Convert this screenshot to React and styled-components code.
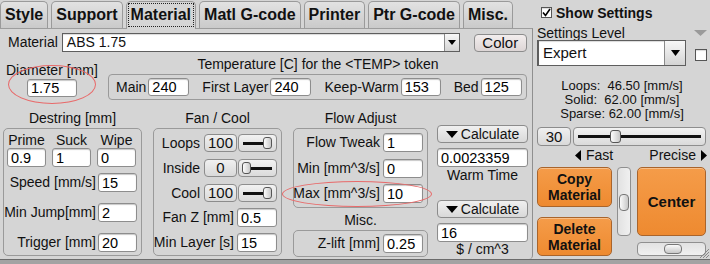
import React from 'react'
import styled, { createGlobalStyle } from 'styled-components'

const GlobalStyle = createGlobalStyle`
  body {
    margin: 0;
    background: #d5d5d5;
    font-family: "Liberation Sans", Arial, sans-serif;
    color: #111;
  }
`

const Window = styled.div`
  width: 710px;
  height: 264px;
  overflow: hidden;
  background: #d5d5d5;
  position: relative;
`

const Main = styled.div`
  display: flex;
  height: 259px;
`

const Footer = styled.div`
  height: 5px;
  box-sizing: border-box;
  border-top: 1px solid #6b6b6b;
  background: #a3a3a3;
`

/* ---------- left tab pane ---------- */

const Left = styled.div`
  width: 533px;
  display: flex;
  flex-direction: column;
`

const TabBar = styled.div`
  display: flex;
  align-items: flex-end;
  gap: 3px;
  height: 28px;
  position: relative;
  z-index: 1;
`

const Tab = styled.div`
  box-sizing: border-box;
  height: ${p => (p.$active ? 28 : 27)}px;
  margin-bottom: ${p => (p.$active ? -1 : 0)}px;
  padding: 0 4px;
  border: 1px solid #9a9a9a;
  border-bottom: none;
  border-radius: 5px 5px 0 0;
  background: ${p => (p.$active ? '#d5d5d5' : 'linear-gradient(#e2e2e2, #cacaca)')};
  font-size: 16px;
  font-weight: bold;
  line-height: 25px;
  white-space: nowrap;

  span {
    display: inline-block;
    line-height: 22px;
    border: 1px dotted ${p => (p.$active ? '#222' : 'transparent')};
    margin: 0 -3px;
    padding: 0 2px;
  }
`

const Panel = styled.div`
  flex: 1;
  box-sizing: border-box;
  border-top: 1px solid #9d9d9d;
  border-right: 1px solid #8f8f8f;
  border-bottom-right-radius: 4px;
  padding: 0 4px 0 3px;
`

const Label = styled.div`
  font-size: 14px;
  line-height: 17px;
  white-space: nowrap;
`

const Field = styled.input.attrs({ type: 'text', readOnly: true })`
  box-sizing: border-box;
  width: ${p => p.$w || 40}px;
  height: ${p => p.$h || 19}px;
  margin: 0;
  padding: 0 3px;
  border: 1px solid #8d8d8d;
  border-radius: 3px;
  background: #fff;
  box-shadow: inset 0 1px 1px rgba(0, 0, 0, 0.22);
  font-family: "Liberation Sans", Arial, sans-serif;
  font-size: 14.5px;
  color: #000;
  outline: none;
  flex-shrink: 0;
`

const PlainButton = styled.div`
  box-sizing: border-box;
  width: ${p => p.$w}px;
  height: ${p => p.$h || 18}px;
  display: flex;
  align-items: center;
  justify-content: center;
  gap: 3px;
  border: 1px solid #8c8c8c;
  border-radius: 4px;
  background: ${p => p.$tint || 'linear-gradient(#f0f0f0, #d9d9d9)'};
  font-size: ${p => p.$size || 14}px;
  line-height: 16px;
  flex-shrink: 0;
`

const MaterialRow = styled.div`
  display: flex;
  align-items: center;
  height: 19px;
  margin-top: 4px;
  padding-left: 5px;

  ${Label} {
    margin-right: 4px;
  }
`

const Combo = styled.div`
  display: flex;
  box-sizing: border-box;
  width: ${p => p.$w}px;
  height: ${p => p.$h}px;
  border: 1px solid #5e5e5e;
  border-left-width: ${p => p.$thick ? 2 : 1}px;
  background: #fff;
  box-shadow: inset 0 1px 1px rgba(0, 0, 0, 0.15);
`

const ComboText = styled.div`
  flex: 1;
  padding-left: 4px;
  font-size: ${p => p.$size || 14}px;
  line-height: ${p => p.$lh || 17}px;
`

const ComboArrow = styled.div`
  width: ${p => p.$w || 14}px;
  display: flex;
  align-items: center;
  justify-content: center;
  border-left: 1px solid #8a8a8a;
  background: linear-gradient(#f7f7f7, #d4d4d4);
`

const SecondRow = styled.div`
  display: flex;
  margin-top: 4px;
`

const DiameterCol = styled.div`
  position: relative;
  width: 105px;
  flex-shrink: 0;

  ${Label} {
    margin: 6px 0 0 3px;
  }
  ${Field} {
    margin-left: 24px;
  }
`

const Highlight = styled.div`
  position: absolute;
  left: ${p => p.$x}px;
  top: ${p => p.$y}px;
  width: ${p => p.$w}px;
  height: ${p => p.$h}px;
  border: 1px solid #e86a6a;
  border-radius: 50%;
  pointer-events: none;
`

const TempCol = styled.div`
  flex: 1;
  ${Label} {
    text-align: center;
  }
`

const TempBox = styled.div`
  box-sizing: border-box;
  height: 26px;
  margin: 1px 1px 0 0;
  border: 1px solid #9a9a9a;
  border-radius: 4px;
  display: flex;
  align-items: center;
  gap: 13px;
  padding-left: 7px;
`

const Pair = styled.div`
  display: flex;
  align-items: center;
  gap: ${p => p.$gap || 2}px;
  justify-content: flex-end;
  margin-top: ${p => p.$top || 0}px;
`

const ThirdRow = styled.div`
  display: flex;
  margin-top: 10px;
`

const Column = styled.div`
  width: ${p => p.$w}px;
  margin-left: ${p => p.$ml || 0}px;
  flex-shrink: 0;
  display: flex;
  flex-direction: column;
`

const GroupTitle = styled(Label)`
  text-align: center;
  margin-top: ${p => p.$top || 0}px;
`

const GroupBox = styled.div`
  box-sizing: border-box;
  height: ${p => p.$h}px;
  margin-top: ${p => p.$top || 1}px;
  border: 1px solid #9a9a9a;
  border-radius: 5px;
  padding: ${p => p.$pad};
  display: flex;
  flex-direction: column;
  ${p => p.$center && 'justify-content: center;'}
`

const Grid3 = styled.div`
  display: grid;
  grid-template-columns: 39px 39px 39px;
  column-gap: 6px;
  ${Label} {
    text-align: center;
    line-height: 16px;
  }
`

const SliderBox = styled.div`
  position: relative;
  box-sizing: border-box;
  width: ${p => p.$w}px;
  height: ${p => p.$h || 18}px;
  border: 1px solid #8e8e8e;
  border-radius: 4px;
  background: linear-gradient(#f2f2f2, #dadada);
  flex-shrink: 0;
`

const Track = styled.div`
  position: absolute;
  left: 4px;
  right: 4px;
  top: 50%;
  height: 3px;
  margin-top: -1.5px;
  background: #111;
`

const Thumb = styled.div`
  position: absolute;
  top: 2px;
  bottom: 2px;
  width: 9px;
  box-sizing: border-box;
  border: 1px solid #555;
  border-radius: 3px;
  background: linear-gradient(90deg, #fdfdfd, #c9c9c9);
`

const CenterText = styled(Label)`
  text-align: center;
  line-height: ${p => p.$lh || 17}px;
`

/* ---------- right settings side ---------- */

const Side = styled.div`
  flex: 1;
  display: flex;
  flex-direction: column;
  padding: 4px 3px 0 4px;
`

const CheckRow = styled.div`
  display: flex;
  align-items: center;
  gap: 4px;
  padding-left: 4px;
  height: 17px;
  font-size: 14px;
  font-weight: bold;
`

const CheckBox = styled.div`
  box-sizing: border-box;
  width: ${p => p.$s}px;
  height: ${p => p.$s}px;
  border: 1px solid #555;
  background: #fff;
  display: flex;
  align-items: center;
  justify-content: center;
  flex-shrink: 0;
  box-shadow: inset 0 1px 1px rgba(0, 0, 0, 0.15);
`

const LevelRow = styled.div`
  display: flex;
  justify-content: space-between;
  align-items: center;
  margin-top: 4px;
  height: 15px;
  font-size: 14px;
`

const SelectRow = styled.div`
  display: flex;
  align-items: center;
  gap: 9px;

  ${CheckBox} {
    margin-top: 4px;
  }
`

const Stats = styled.div`
  margin-top: 13px;
  font-size: 13px;
  line-height: 14px;
  text-align: center;
  white-space: pre;
`

const SpeedRow = styled.div`
  display: flex;
  gap: 2px;
  margin-top: 6px;
`

const FastRow = styled.div`
  display: flex;
  justify-content: space-between;
  margin-top: 2px;
  padding: 0 0 0 38px;
  font-size: 14px;
  line-height: 15px;

  span {
    display: flex;
    align-items: center;
    gap: 5px;
  }
`

const ButtonArea = styled.div`
  display: flex;
  gap: 5px;
  margin-top: 4px;
`

const Stack = styled.div`
  display: flex;
  flex-direction: column;
  gap: ${p => p.$gap}px;
  width: ${p => p.$w}px;
  margin-left: ${p => p.$ml || 0}px;
`

const OrangeButton = styled.div`
  box-sizing: border-box;
  height: ${p => p.$h}px;
  border: 1px solid #a9642b;
  border-radius: 5px;
  background: linear-gradient(#f59c49, #ee8a30);
  display: flex;
  align-items: center;
  justify-content: center;
  text-align: center;
  font-weight: bold;
  font-size: ${p => p.$size || 14}px;
  line-height: 16px;
  box-shadow: inset 0 1px 0 rgba(255, 255, 255, 0.35);
`

const ScrollTrack = styled.div`
  box-sizing: border-box;
  width: ${p => p.$w}px;
  height: ${p => p.$h}px;
  border: 1px solid #8f8f8f;
  border-radius: 4px;
  background: linear-gradient(${p => (p.$vertical ? '90deg, ' : '')}#e2e2e2, #f0f0f0);
  display: flex;
  flex-direction: ${p => (p.$vertical ? 'column' : 'row')};
  align-items: center;
  padding: ${p => p.$pad};
`

const ScrollThumb = styled.div`
  box-sizing: border-box;
  width: ${p => p.$w}px;
  height: ${p => p.$h}px;
  border: 1px solid #777;
  border-radius: 4px;
  background: linear-gradient(${p => (p.$vertical ? '90deg, ' : '')}#fafafa, #c8c8c8);
`

const Grip = styled.svg`
  position: absolute;
  right: 1px;
  bottom: 6px;
`

const Tri = ({ dir = 'down', w = 8, h = 5, color = '#000' }) => {
  const d = {
    down: `M0 0 L${w} 0 L${w / 2} ${h} Z`,
    left: `M${w} 0 L${w} ${h} L0 ${h / 2} Z`,
    right: `M0 0 L0 ${h} L${w} ${h / 2} Z`,
  }[dir]
  return (
    <svg width={w} height={h} viewBox={`0 0 ${w} ${h}`}>
      <path d={d} fill={color} />
    </svg>
  )
}

const Check = () => (
  <svg width="9" height="9" viewBox="0 0 9 9">
    <path d="M1 4.5 L3.5 7.5 L8 1" fill="none" stroke="#000" strokeWidth="1.6" />
  </svg>
)

const Slider = ({ w, value }) => (
  <SliderBox $w={w}>
    <Track />
    <Thumb style={{ left: value > 0 ? `${w - 15}px` : '3px' }} />
  </SliderBox>
)

const FanRow = ({ label, value, top }) => (
  <Pair $top={top} $gap={4}>
    <Label>{label}</Label>
    <Pair $gap={1}>
      <PlainButton $w={33} $size={15}>{value}</PlainButton>
      <Slider w={39} value={Number(value)} />
    </Pair>
  </Pair>
)

const tabs = ['Style', 'Support', 'Material', 'Matl G-code', 'Printer', 'Ptr G-code', 'Misc.']

export default function App() {
  return (
    <Window>
      <GlobalStyle />
      <Main>
        <Left>
          <TabBar>
            {tabs.map(t => (
              <Tab key={t} $active={t === 'Material'}>
                <span>{t}</span>
              </Tab>
            ))}
          </TabBar>
          <Panel>
            <MaterialRow>
              <Label>Material</Label>
              <Combo $w={398} $h={19}>
                <ComboText>ABS 1.75</ComboText>
                <ComboArrow>
                  <Tri w={8} h={5} />
                </ComboArrow>
              </Combo>
              <PlainButton $w={53} $size={15} $tint="linear-gradient(#f3eeee, #ddd6d6)" style={{ marginLeft: 14 }}>
                Color
              </PlainButton>
            </MaterialRow>

            <SecondRow>
              <DiameterCol>
                <Label>Diameter [mm]</Label>
                <Field $w={50} $h={18} defaultValue="1.75" />
                <Highlight $x={5} $y={9} $w={86} $h={37} />
              </DiameterCol>
              <TempCol>
                <Label>Temperature [C] for the &lt;TEMP&gt; token</Label>
                <TempBox>
                  <Pair>
                    <Label>Main</Label>
                    <Field $w={41} $h={18} defaultValue="240" />
                  </Pair>
                  <Pair>
                    <Label>First Layer</Label>
                    <Field $w={41} $h={18} defaultValue="240" />
                  </Pair>
                  <Pair>
                    <Label>Keep-Warm</Label>
                    <Field $w={40} $h={18} defaultValue="153" />
                  </Pair>
                  <Pair>
                    <Label>Bed</Label>
                    <Field $w={41} $h={18} defaultValue="125" />
                  </Pair>
                </TempBox>
              </TempCol>
            </SecondRow>

            <ThirdRow>
              <Column $w={139}>
                <GroupTitle>Destring [mm]</GroupTitle>
                <GroupBox $h={128} $pad="3px 4px 0 3px">
                  <Grid3>
                    <Label>Prime</Label>
                    <Label>Suck</Label>
                    <Label>Wipe</Label>
                    <Field $w={39} defaultValue="0.9" />
                    <Field $w={39} defaultValue="1" />
                    <Field $w={39} defaultValue="0" />
                  </Grid3>
                  <Pair $top={6}>
                    <Label>Speed [mm/s]</Label>
                    <Field $w={39} defaultValue="15" />
                  </Pair>
                  <Pair $top={11}>
                    <Label>Min Jump[mm]</Label>
                    <Field $w={39} defaultValue="2" />
                  </Pair>
                  <Pair $top={11}>
                    <Label>Trigger [mm]</Label>
                    <Field $w={39} defaultValue="20" />
                  </Pair>
                </GroupBox>
              </Column>

              <Column $w={129} $ml={11}>
                <GroupTitle>Fan / Cool</GroupTitle>
                <GroupBox $h={128} $pad="5px 4px 0 0">
                  <FanRow label="Loops" value="100" top={0} />
                  <FanRow label="Inside" value="0" top={7} />
                  <FanRow label="Cool" value="100" top={7} />
                  <Pair $top={6} $gap={3}>
                    <Label>Fan Z [mm]</Label>
                    <Field $w={40} defaultValue="0.5" />
                  </Pair>
                  <Pair $top={6} $gap={3}>
                    <Label>Min Layer [s]</Label>
                    <Field $w={40} defaultValue="15" />
                  </Pair>
                </GroupBox>
              </Column>

              <Column $w={135} $ml={11}>
                <GroupTitle>Flow Adjust</GroupTitle>
                <GroupBox $h={80} $pad="4px 4px 0 0">
                  <Pair $gap={3}>
                    <Label>Flow Tweak</Label>
                    <Field $w={40} defaultValue="1" />
                  </Pair>
                  <Pair $top={7} $gap={3}>
                    <Label>Min [mm^3/s]</Label>
                    <Field $w={40} defaultValue="0" />
                  </Pair>
                  <Pair $top={6} $gap={3} style={{ position: 'relative' }}>
                    <Label>Max [mm^3/s]</Label>
                    <Field $w={40} defaultValue="10" />
                    <Highlight $x={-12} $y={-3} $w={148} $h={24} />
                  </Pair>
                </GroupBox>
                <GroupTitle $top={4}>Misc.</GroupTitle>
                <GroupBox $h={27} $top={0} $pad="0 4px 0 0" $center>
                  <Pair $gap={3}>
                    <Label>Z-lift [mm]</Label>
                    <Field $w={40} defaultValue="0.25" />
                  </Pair>
                </GroupBox>
              </Column>

              <Column $w={91} $ml={9}>
                <PlainButton $w={91} style={{ marginTop: 15 }}>
                  <Tri w={12} h={7} />
                  Calculate
                </PlainButton>
                <Field $w={91} defaultValue="0.0023359" style={{ marginTop: 5 }} />
                <CenterText>Warm Time</CenterText>
                <PlainButton $w={91} style={{ marginTop: 16 }}>
                  <Tri w={12} h={7} />
                  Calculate
                </PlainButton>
                <Field $w={91} defaultValue="16" style={{ marginTop: 5 }} />
                <CenterText $lh={15}>$ / cm^3</CenterText>
              </Column>
            </ThirdRow>
          </Panel>
        </Left>

        <Side>
          <CheckRow>
            <CheckBox $s={11}>
              <Check />
            </CheckBox>
            Show Settings
          </CheckRow>
          <LevelRow>
            Settings Level
            <Tri w={13} h={6} color="#9a9a9a" />
          </LevelRow>
          <SelectRow>
            <Combo $w={149} $h={26} $thick>
              <ComboText $size={15} $lh={24}>Expert</ComboText>
              <ComboArrow $w={20}>
                <Tri w={9} h={6} />
              </ComboArrow>
            </Combo>
            <CheckBox $s={12} />
          </SelectRow>
          <Stats>
            {'Loops:  46.50 [mm/s]\nSolid:  62.00 [mm/s]\nSparse: 62.00 [mm/s]'}
          </Stats>
          <SpeedRow>
            <PlainButton $w={34} $h={19} $size={15}>30</PlainButton>
            <SliderBox $w={133} $h={19}>
              <Track />
              <Thumb style={{ left: '36px', width: '11px' }} />
            </SliderBox>
          </SpeedRow>
          <FastRow>
            <span>
              <Tri dir="left" w={6} h={11} />
              Fast
            </span>
            <span>
              Precise
              <Tri dir="right" w={6} h={11} />
            </span>
          </FastRow>
          <ButtonArea>
            <Stack $w={75} $gap={10}>
              <OrangeButton $h={40}>Copy<br />Material</OrangeButton>
              <OrangeButton $h={39}>Delete<br />Material</OrangeButton>
            </Stack>
            <ScrollTrack $vertical $w={14} $h={69} $pad="26px 0 0">
              <ScrollThumb $vertical $w={10} $h={17} />
            </ScrollTrack>
            <Stack $w={69} $gap={6} $ml={1}>
              <OrangeButton $h={69} $size={15}>Center</OrangeButton>
              <ScrollTrack $w={69} $h={14} $pad="0 0 0 26px">
                <ScrollThumb $w={18} $h={10} />
              </ScrollTrack>
            </Stack>
          </ButtonArea>
        </Side>
      </Main>
      <Footer />
      <Grip width="10" height="10" viewBox="0 0 10 10">
        <path d="M10 1 L1 10 M10 4 L4 10 M10 7 L7 10" stroke="#888" strokeWidth="1" />
      </Grip>
    </Window>
  )
}
